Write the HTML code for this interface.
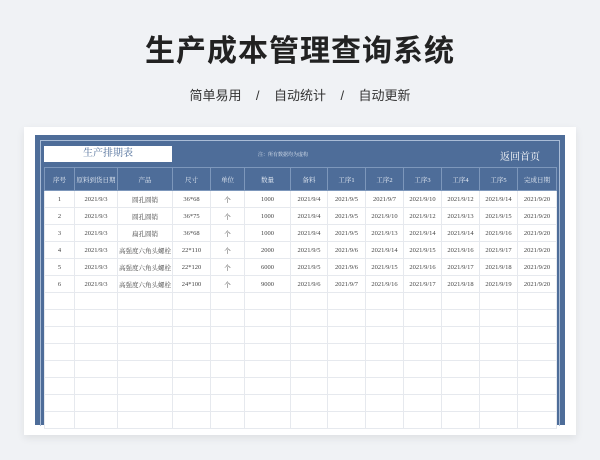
<!DOCTYPE html><html><head><meta charset="utf-8"><style>
body{margin:0;width:600px;height:460px;background:#f0f2f5;font-family:"Liberation Serif","Noto Serif CJK SC",serif;position:relative;overflow:hidden}
.h1{position:absolute;top:26px;width:600px;text-align:center;font:bold 30px "Liberation Sans","Noto Sans CJK SC",sans-serif;color:#222;letter-spacing:1px}
.sub{position:absolute;top:85px;width:600px;text-align:center;font:13px "Liberation Sans","Noto Sans CJK SC",sans-serif;color:#333}
.card{position:absolute;left:24px;top:127px;width:552px;height:308px;background:#fff;box-shadow:0 3px 8px rgba(0,0,0,.08)}
.blue{position:absolute;left:35px;top:135px;width:530px;height:290px;background:#4e6d99}
.frame{position:absolute;left:40px;top:140px;width:518px;height:285px;border:1px solid #a9bcd6;border-bottom:none}
.tb{position:absolute;left:44px;top:146px;width:128px;height:16px;background:#fff;color:#4e6d99;font-size:10px;text-align:center;line-height:16px}
.note{position:absolute;left:258px;top:151px;color:#dde5f0;font-size:5px}
.back{position:absolute;left:500px;top:148px;color:#fff;font-size:10px}
table{position:absolute;left:44px;top:167px;width:512px;border-collapse:collapse;table-layout:fixed}
td{height:16px;border:1px solid #e6e9ee;font-size:6.5px;text-align:center;color:#444;padding:0;white-space:nowrap;overflow:hidden;background:#fff}
tr.hd td{height:22px;background:#4e6d99;color:#e8eef6;border-color:#7d97bb}
</style></head><body>
<div class="h1">生产成本管理查询系统</div>
<div class="sub">简单易用&nbsp;&nbsp;&nbsp;&nbsp;/&nbsp;&nbsp;&nbsp;&nbsp;自动统计&nbsp;&nbsp;&nbsp;&nbsp;/&nbsp;&nbsp;&nbsp;&nbsp;自动更新</div>
<div class="card"></div><div class="blue"></div><div class="frame"></div>
<div class="tb">生产排期表</div><div class="note">注：所有数据均为虚构</div><div class="back">返回首页</div>
<table>
<colgroup><col style="width:30px"><col style="width:43px"><col style="width:55px"><col style="width:38px"><col style="width:34px"><col style="width:46px"><col style="width:37px"><col style="width:38px"><col style="width:38px"><col style="width:38px"><col style="width:38px"><col style="width:38px"><col style="width:39px"></colgroup>
<tr class="hd"><td>序号</td><td>原料到货日期</td><td>产品</td><td>尺寸</td><td>单位</td><td>数量</td><td>备料</td><td>工序1</td><td>工序2</td><td>工序3</td><td>工序4</td><td>工序5</td><td>完成日期</td></tr>
<tr><td>1</td><td>2021/9/3</td><td>圆孔圆销</td><td>36*68</td><td>个</td><td>1000</td><td>2021/9/4</td><td>2021/9/5</td><td>2021/9/7</td><td>2021/9/10</td><td>2021/9/12</td><td>2021/9/14</td><td>2021/9/20</td></tr>
<tr><td>2</td><td>2021/9/3</td><td>圆孔圆销</td><td>36*75</td><td>个</td><td>1000</td><td>2021/9/4</td><td>2021/9/5</td><td>2021/9/10</td><td>2021/9/12</td><td>2021/9/13</td><td>2021/9/15</td><td>2021/9/20</td></tr>
<tr><td>3</td><td>2021/9/3</td><td>扁孔圆销</td><td>36*68</td><td>个</td><td>1000</td><td>2021/9/4</td><td>2021/9/5</td><td>2021/9/13</td><td>2021/9/14</td><td>2021/9/14</td><td>2021/9/16</td><td>2021/9/20</td></tr>
<tr><td>4</td><td>2021/9/3</td><td>高强度六角头螺栓</td><td>22*110</td><td>个</td><td>2000</td><td>2021/9/5</td><td>2021/9/6</td><td>2021/9/14</td><td>2021/9/15</td><td>2021/9/16</td><td>2021/9/17</td><td>2021/9/20</td></tr>
<tr><td>5</td><td>2021/9/3</td><td>高强度六角头螺栓</td><td>22*120</td><td>个</td><td>6000</td><td>2021/9/5</td><td>2021/9/6</td><td>2021/9/15</td><td>2021/9/16</td><td>2021/9/17</td><td>2021/9/18</td><td>2021/9/20</td></tr>
<tr><td>6</td><td>2021/9/3</td><td>高强度六角头螺栓</td><td>24*100</td><td>个</td><td>9000</td><td>2021/9/6</td><td>2021/9/7</td><td>2021/9/16</td><td>2021/9/17</td><td>2021/9/18</td><td>2021/9/19</td><td>2021/9/20</td></tr>
<tr><td></td><td></td><td></td><td></td><td></td><td></td><td></td><td></td><td></td><td></td><td></td><td></td><td></td></tr>
<tr><td></td><td></td><td></td><td></td><td></td><td></td><td></td><td></td><td></td><td></td><td></td><td></td><td></td></tr>
<tr><td></td><td></td><td></td><td></td><td></td><td></td><td></td><td></td><td></td><td></td><td></td><td></td><td></td></tr>
<tr><td></td><td></td><td></td><td></td><td></td><td></td><td></td><td></td><td></td><td></td><td></td><td></td><td></td></tr>
<tr><td></td><td></td><td></td><td></td><td></td><td></td><td></td><td></td><td></td><td></td><td></td><td></td><td></td></tr>
<tr><td></td><td></td><td></td><td></td><td></td><td></td><td></td><td></td><td></td><td></td><td></td><td></td><td></td></tr>
<tr><td></td><td></td><td></td><td></td><td></td><td></td><td></td><td></td><td></td><td></td><td></td><td></td><td></td></tr>
<tr><td></td><td></td><td></td><td></td><td></td><td></td><td></td><td></td><td></td><td></td><td></td><td></td><td></td></tr>
</table>
</body></html>
